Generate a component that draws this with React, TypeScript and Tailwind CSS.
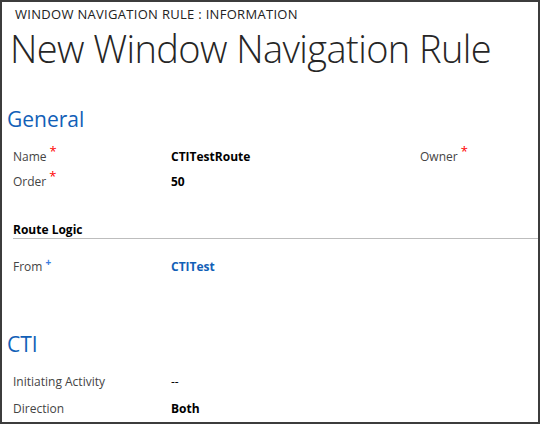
import React from 'react'

const font = { fontFamily: '"Open Sans", "Noto Sans", Arial, sans-serif' }

function Req() {
  return <span className="text-[#ff0000] text-[13px] leading-none relative -top-[5px] ml-[3px]">*</span>
}

function Rec() {
  return <span className="text-[#3b7de0] text-[10px] leading-none relative -top-[5px] ml-[3px] font-bold">+</span>
}

export default function App() {
  return (
    <div className="w-[540px] h-[424px] bg-white border-2 border-[#3c3c3c] overflow-hidden text-[#444]" style={font}>
      <div className="pl-[13px] pt-[4px] text-[13px] leading-[16px] text-[#222] tracking-[0.3px]">
        WINDOW NAVIGATION RULE : INFORMATION
      </div>
      <h1 className="pl-[8px] mt-[6px] text-[38px] leading-[40px] font-light text-[#262626] tracking-[-0.6px]">
        New Window Navigation Rule
      </h1>

      <h2 className="pl-[5px] mt-[37px] text-[21px] leading-[28px] text-[#1160b7]">General</h2>
      <div className="mt-[11px] pl-[11px] text-[12px]">
        <div className="flex items-center h-[25px]">
          <div className="w-[158px]">Name<Req /></div>
          <div className="w-[249px] font-bold text-black">CTITestRoute</div>
          <div>Owner<Req /></div>
        </div>
        <div className="flex items-center h-[25px]">
          <div className="w-[158px]">Order<Req /></div>
          <div className="font-bold text-black">50</div>
        </div>
      </div>

      <div className="ml-[11px] mt-[29px] border-b border-[#bdbdbd] pb-[1px]">
        <div className="text-[12px] font-bold text-black leading-[14px]">Route Logic</div>
      </div>
      <div className="pl-[11px] mt-[15px] text-[12px] flex items-center h-[25px]">
        <div className="w-[158px]">From<Rec /></div>
        <div className="font-bold text-[#1160b7]">CTITest</div>
      </div>

      <h2 className="pl-[5px] mt-[51px] text-[21px] leading-[28px] text-[#1160b7]">CTI</h2>
      <div className="mt-[10px] pl-[11px] text-[12px]">
        <div className="flex items-center h-[27px]">
          <div className="w-[158px]">Initiating Activity</div>
          <div className="text-black">--</div>
        </div>
        <div className="flex items-center h-[27px]">
          <div className="w-[158px]">Direction</div>
          <div className="font-bold text-black">Both</div>
        </div>
      </div>
    </div>
  )
}
